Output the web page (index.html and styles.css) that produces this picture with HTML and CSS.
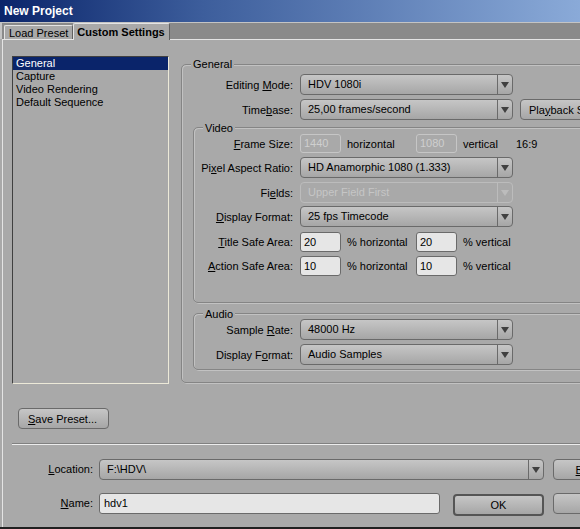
FILE: index.html
```html
<!DOCTYPE html>
<html>
<head>
<meta charset="utf-8">
<title>New Project</title>
<link rel="stylesheet" href="styles.css">
</head>
<body>
<div class="window">
  <div class="titlebar">New Project</div>
  <div class="tabstrip">
    <div class="tab">Load Preset</div>
    <div class="tab active">Custom Settings</div>
  </div>
  <div class="panel">
    <div class="top">
      <ul class="list">
        <li class="sel">General</li>
        <li>Capture</li>
        <li>Video Rendering</li>
        <li>Default Sequence</li>
      </ul>
      <div class="group general">
        <span class="gtitle">General</span>
        <div class="row r-edit">
          <label class="lbl lbl-g">Editing <u>M</u>ode:</label>
          <div class="select"><span class="val">HDV 1080i</span><span class="arrow"><i></i></span></div>
        </div>
        <div class="row">
          <label class="lbl lbl-g">Time<u>b</u>ase:</label>
          <div class="select"><span class="val">25,00 frames/second</span><span class="arrow"><i></i></span></div>
          <button class="btn playback">Pla<u>y</u>back Settings...</button>
        </div>
        <div class="group video">
          <span class="gtitle">Video</span>
          <div class="row r-frame">
            <label class="lbl"><u>F</u>rame Size:</label>
            <div class="field disabled">1440</div>
            <span class="unit">horizontal</span>
            <div class="field disabled">1080</div>
            <span class="unit unit-v">vertical</span>
            <span class="ratio">16:9</span>
          </div>
          <div class="row r-pix">
            <label class="lbl">Pi<u>x</u>el Aspect Ratio:</label>
            <div class="select"><span class="val">HD Anamorphic 1080 (1.333)</span><span class="arrow"><i></i></span></div>
          </div>
          <div class="row r-fields">
            <label class="lbl">Fi<u>e</u>lds:</label>
            <div class="select disabled"><span class="val">Upper Field First</span><span class="arrow"><i></i></span></div>
          </div>
          <div class="row r-disp">
            <label class="lbl"><u>D</u>isplay Format:</label>
            <div class="select"><span class="val">25 fps Timecode</span><span class="arrow"><i></i></span></div>
          </div>
          <div class="row r-safe">
            <label class="lbl"><u>T</u>itle Safe Area:</label>
            <div class="field">20</div>
            <span class="unit">% horizontal</span>
            <div class="field">20</div>
            <span class="unit">% vertical</span>
          </div>
          <div class="row r-safe">
            <label class="lbl"><u>A</u>ction Safe Area:</label>
            <div class="field">10</div>
            <span class="unit">% horizontal</span>
            <div class="field">10</div>
            <span class="unit">% vertical</span>
          </div>
        </div>
        <div class="group audio">
          <span class="gtitle">Audio</span>
          <div class="row r-edit">
            <label class="lbl">Sample <u>R</u>ate:</label>
            <div class="select"><span class="val">48000 Hz</span><span class="arrow"><i></i></span></div>
          </div>
          <div class="row">
            <label class="lbl">Display F<u>o</u>rmat:</label>
            <div class="select"><span class="val">Audio Samples</span><span class="arrow"><i></i></span></div>
          </div>
        </div>
      </div>
    </div>
    <button class="btn save"><u>S</u>ave Preset...</button>
    <div class="separator"></div>
    <div class="brow">
      <label class="blbl"><u>L</u>ocation:</label>
      <div class="select loc"><span class="val">F:\HDV\</span><span class="arrow"><i></i></span></div>
      <button class="btn side"><u>B</u>rowse...</button>
    </div>
    <div class="brow name-row">
      <label class="blbl"><u>N</u>ame:</label>
      <div class="field name">hdv1</div>
      <button class="btn ok">OK</button>
      <button class="btn side">Cancel</button>
    </div>
  </div>
</div>
</body>
</html>
```

FILE: styles.css
```css
*, *::before, *::after {
  box-sizing: border-box;
}
html, body {
  margin: 0;
  padding: 0;
}
body {
  width: 580px;
  height: 529px;
  overflow: hidden;
  background: #a9a9a9;
  font-family: "Liberation Sans", Arial, sans-serif;
  font-size: 11px;
  color: #000;
}
.window {
  display: flex;
  flex-direction: column;
  height: 529px;
  border-bottom: 2px solid #202020;
  overflow: hidden;
}
.titlebar {
  height: 22px;
  line-height: 23px;
  padding-left: 4px;
  flex: none;
  background: linear-gradient(to right, #0a246a 0%, #3d5e9c 35%, #8aaad8 100%);
  color: #fff;
  font-weight: bold;
  font-size: 12px;
}
.tabstrip {
  flex: none;
  height: 17px;
  display: flex;
  align-items: flex-end;
  background: #8a8a8a;
  border-top: 1px solid #c4c4c4;
  padding-left: 2px;
  box-shadow: inset 2px 0 0 #c4c4c4;
}
.tab {
  height: 14px;
  line-height: 14px;
  padding: 0 4px;
  margin-left: 2px;
  background: #a9a9a9;
  border-top: 1px solid #e4e4e4;
  border-left: 1px solid #e4e4e4;
  border-right: 1px solid #606060;
  border-radius: 2px 2px 0 0;
}
.tab.active {
  height: 17px;
  line-height: 16px;
  font-weight: bold;
  margin-left: 0;
  padding: 0 4px 0 3px;
  position: relative;
  top: 1px;
}
.panel {
  flex: 1;
  border-top: 1px solid #e4e4e4;
  border-left: 1px solid #e4e4e4;
  margin-left: 2px;
  padding: 16px 0 0 9px;
}
.top {
  display: flex;
  align-items: flex-start;
}
.list {
  list-style: none;
  margin: 0;
  padding: 0;
  width: 157px;
  height: 328px;
  border-top: 1px solid #404040;
  border-left: 1px solid #404040;
  border-right: 1px solid #ece9d8;
  border-bottom: 1px solid #ece9d8;
  flex: none;
}
.list li {
  height: 13px;
  line-height: 13px;
  padding-left: 3px;
}
.list li.sel {
  background: #0a246a;
  color: #fff;
}
.group {
  position: relative;
  border: 1px solid #858585;
  border-radius: 5px;
  box-shadow: inset 1px 1px 0 #c2c2c2, 1px 1px 0 #c2c2c2;
}
.gtitle {
  position: absolute;
  top: -6px;
  left: 9px;
  padding: 0 2px;
  line-height: 13px;
  background: #a9a9a9;
}
.general {
  flex: none;
  margin-left: 12px;
  margin-top: 8px;
  width: 420px;
  height: 319px;
  padding-top: 9px;
}
.general > .gtitle {
  top: -7px;
}
.row {
  display: flex;
  align-items: center;
  height: 21px;
  margin-bottom: 3px;
}
.r-edit {
  margin-bottom: 4px;
}
.lbl {
  flex: none;
  width: 99px;
  text-align: right;
  margin-right: 7px;
}
.lbl-g {
  width: 111px;
}
.select {
  flex: none;
  width: 213px;
  height: 21px;
  border: 1px solid #6a6a6a;
  border-radius: 4px;
  background: linear-gradient(#c6c6c6, #a6a6a6);
  display: flex;
  align-items: stretch;
}
.select .val {
  flex: 1;
  padding-left: 7px;
  line-height: 19px;
  white-space: nowrap;
  overflow: hidden;
}
.select .arrow {
  flex: none;
  width: 15px;
  border-left: 1px solid #6a6a6a;
  display: flex;
  align-items: center;
  justify-content: center;
}
.select .arrow i {
  width: 0;
  height: 0;
  border-left: 4px solid transparent;
  border-right: 4px solid transparent;
  border-top: 6px solid #404040;
}
.select.disabled {
  border-color: #bcbcbc;
  background: #a9a9a9;
  color: #c6c6c6;
}
.select.disabled .arrow {
  border-left-color: #bcbcbc;
}
.select.disabled .arrow i {
  border-top-color: #bcbcbc;
}
.btn {
  font-family: inherit;
  font-size: 11px;
  color: #000;
  height: 21px;
  border: 1px solid #6a6a6a;
  border-radius: 4px;
  background: linear-gradient(#c6c6c6, #a6a6a6);
  padding: 0 8px;
  white-space: nowrap;
  flex: none;
}
.playback {
  margin-left: 7px;
  width: 110px;
  text-align: left;
}
.video {
  margin-left: 11px;
  margin-top: 7px;
  width: 420px;
  height: 176px;
  padding-top: 6px;
}
.r-frame {
  height: 19px;
  margin-bottom: 4px;
}
.r-pix {
  margin-bottom: 4px;
}
.r-fields {
  margin-bottom: 3px;
}
.r-disp {
  margin-bottom: 5px;
}
.field {
  flex: none;
  width: 41px;
  height: 20px;
  line-height: 18px;
  padding-left: 3px;
  border: 1px solid #6a6a6a;
  border-radius: 3px;
  background: #e6e6e6;
}
.r-frame .field {
  height: 19px;
  line-height: 17px;
}
.field.disabled {
  border-color: #c6c6c6;
  background: #a9a9a9;
  color: #cfcfcf;
}
.unit {
  flex: none;
  width: 75px;
  padding-left: 6px;
  white-space: nowrap;
}
.unit-v {
  width: 59px;
}
.r-safe {
  height: 20px;
  margin-bottom: 4px;
}
.audio {
  margin-left: 11px;
  margin-top: 10px;
  width: 420px;
  height: 57px;
  padding-top: 5px;
}
.save {
  display: block;
  margin: 24px 0 0 6px;
  width: 91px;
  text-align: left;
  padding-left: 9px;
}
.separator {
  margin-top: 14px;
  height: 2px;
  border-top: 1px solid #808080;
  border-bottom: 1px solid #ececec;
}
.brow {
  display: flex;
  align-items: flex-start;
  margin-top: 14px;
}
.brow .blbl {
  line-height: 21px;
}
.name-row {
  margin-top: 13px;
}
.blbl {
  flex: none;
  width: 81px;
  text-align: right;
  margin-right: 6px;
}
.select.loc {
  width: 445px;
}
.side {
  margin-left: 9px;
  width: 91px;
  text-align: center;
  padding: 0;
}
.field.name {
  width: 341px;
  height: 21px;
  line-height: 19px;
  padding-left: 4px;
}
.ok {
  margin-left: 13px;
  margin-top: 1px;
  width: 91px;
  height: 22px;
  border: 2px solid #555;
}
```
